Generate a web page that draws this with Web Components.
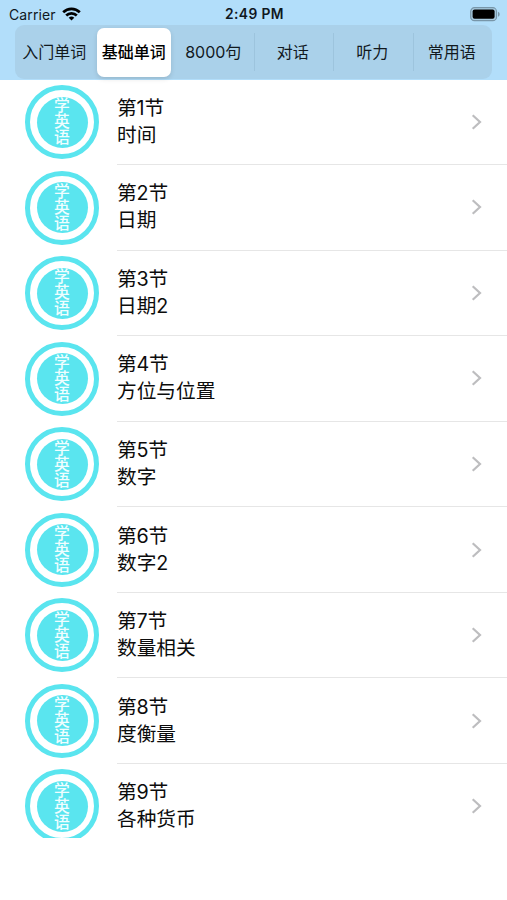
<!DOCTYPE html>
<html lang="zh-CN">
<head>
<meta charset="utf-8">
<title>学英语</title>
<style>
	body{
		margin: 0;
		height: 900px;
		overflow: hidden;
		background: #fff;
		color: #0c0c0c;
		font-family: Inter, "Noto Sans CJK SC", sans-serif;
	}
	.top{
		height: 79.5px;
		background: #b2defa;
	}
</style>
</head>
<body>
	<header class="top">
		<status-bar carrier="Carrier" time="2:49 PM"></status-bar>
		<segment-bar>
			<segment-item>入门单词</segment-item>
			<segment-item selected>基础单词</segment-item>
			<segment-item>8000句</segment-item>
			<segment-item divided>对话</segment-item>
			<segment-item divided>听力</segment-item>
			<segment-item divided>常用语</segment-item>
		</segment-bar>
	</header>
	<lesson-list></lesson-list>

<script>
(()=>{
	class StatusBar extends HTMLElement {
		constructor() {
			super();
			this.attachShadow({mode: 'open'});
			this.shadowRoot.innerHTML = `
				<style>
					:host{
						display: grid;
						grid-template-columns: 1fr auto 1fr;
						align-items: center;
						box-sizing: border-box;
						height: 25px;
						padding: 2px 7px 0 9px;
						font-size: 14px;
						line-height: 23px;
						color: #10181e;
					}
					.left{
						display: flex;
						align-items: center;
						gap: 6px;
					}
					#carrier{
						letter-spacing: .1px;
					}
					#time{
						font-weight: 600;
						font-size: 13.8px;
						letter-spacing: .4px;
						padding-top: 1px;
					}
					.battery{
						justify-self: end;
					}
					svg{
						display: block;
					}
				</style>
				<div class="left">
					<span id="carrier"></span>
					<svg width="19" height="14" viewBox="0 0 19 14" fill="none" stroke="#000" stroke-width="2.7">
						<path d="M1.2 5.3a11.8 11.8 0 0 1 16.6 0"/>
						<path d="M4.2 8.5a7.5 7.5 0 0 1 10.6 0"/>
						<path d="M9.5 13.6L6.7 10.8a4 4 0 0 1 5.6 0z" fill="#000" stroke="none"/>
					</svg>
				</div>
				<span id="time"></span>
				<svg class="battery" width="30" height="15" viewBox="0 0 30 15">
					<rect x=".7" y=".7" width="25.8" height="13" rx="3.8" fill="#a9cce2" stroke="#7896a9" stroke-width="1.2"/>
					<rect x="2.6" y="2.6" width="22" height="9.2" rx="2" fill="#000"/>
					<path d="M28 4.7c2.2 1 2.2 4 0 5z" fill="#7896a9"/>
				</svg>
			`;
			this.shadowRoot.getElementById('carrier').textContent = this.getAttribute('carrier');
			this.shadowRoot.getElementById('time').textContent = this.getAttribute('time');
		}
	}

	class SegmentBar extends HTMLElement {
		constructor() {
			super();
			this.attachShadow({mode: 'open'});
			this.shadowRoot.innerHTML = `
				<style>
					:host{
						display: grid;
						grid-template-columns: repeat(6, 1fr);
						height: 54px;
						margin: 0 15px;
						border-radius: 9px;
						background: #aad1ea;
					}
				</style>
				<slot></slot>
			`;
		}
	}

	class SegmentItem extends HTMLElement {
		constructor() {
			super();
			this.attachShadow({mode: 'open'});
			this.shadowRoot.innerHTML = `
				<style>
					:host{
						display: flex;
						padding: 3px 3px 2.5px 2px;
						font-size: 16px;
						line-height: 25px;
						white-space: nowrap;
						color: #12191e;
					}
					div{
						flex: 1;
						display: flex;
						align-items: center;
						justify-content: center;
						border-radius: 7px;
					}
					:host([selected]) div{
						background: #fff;
						color: #000;
						font-weight: 500;
						box-shadow: 0 2px 5px rgba(0, 0, 0, .12);
					}
					:host([divided]){
						background: linear-gradient(#9dc4dd, #9dc4dd) 0 50% / 1px 38px no-repeat;
					}
				</style>
				<div><slot></slot></div>
			`;
		}
	}

	class LessonBadge extends HTMLElement {
		constructor() {
			super();
			this.attachShadow({mode: 'open'});
			this.shadowRoot.innerHTML = `
				<style>
					:host{
						display: grid;
						place-items: center;
						box-sizing: border-box;
						width: 74px;
						height: 74px;
						border: 5px solid #5ae5ef;
						border-radius: 50%;
						background: #fff;
					}
					div{
						display: flex;
						align-items: center;
						justify-content: center;
						width: 51px;
						height: 51px;
						border-radius: 50%;
						background: #5ae5ef;
						color: #effeff;
						font: 500 15.8px/16px "Noto Sans CJK SC", sans-serif;
					}
					span{
						writing-mode: vertical-rl;
						letter-spacing: .3px;
						padding: 0 1px 1px 0;
					}
				</style>
				<div><span>学英语</span></div>
			`;
		}
	}

	class LessonRow extends HTMLElement {
		constructor() {
			super();
			this.attachShadow({mode: 'open'});
			this.shadowRoot.innerHTML = `
				<style>
					:host{
						display: flex;
						height: 85.55px;
						padding-left: 25px;
						gap: 18px;
					}
					lesson-badge{
						margin-top: 5.5px;
						flex: none;
					}
					.body{
						flex: 1;
						display: flex;
						align-items: center;
						justify-content: space-between;
						box-sizing: border-box;
						padding-right: 25px;
						border-bottom: 1px solid #e6e6e6;
					}
					:host(:last-child) .body{
						border-color: transparent;
					}
					.text{
						font-size: 19.7px;
						line-height: 27px;
					}
				</style>
				<lesson-badge></lesson-badge>
				<div class="body">
					<div class="text">
						<div><slot name="number"></slot></div>
						<div><slot></slot></div>
					</div>
					<svg width="11" height="18" viewBox="0 0 11 18" fill="none" stroke="#bdbdbf" stroke-width="2.2">
						<path d="M1.7 2.2L9 9L1.7 15.8"/>
					</svg>
				</div>
			`;
		}
	}

	const lessons = ['时间', '日期', '日期2', '方位与位置', '数字', '数字2', '数量相关', '度衡量', '各种货币'];

	class LessonList extends HTMLElement {
		constructor() {
			super();
			this.attachShadow({mode: 'open'});
			this.shadowRoot.innerHTML = `
				<style>
					:host{
						display: block;
						height: 758px;
						overflow: hidden;
					}
					span{
						letter-spacing: -.15px;
					}
				</style>
				${lessons.map((title, i)=>`
					<lesson-row><span slot="number">第${i + 1}节</span>${title}</lesson-row>
				`).join('')}
			`;
		}
	}

	window.customElements.define('status-bar', StatusBar);
	window.customElements.define('segment-bar', SegmentBar);
	window.customElements.define('segment-item', SegmentItem);
	window.customElements.define('lesson-badge', LessonBadge);
	window.customElements.define('lesson-row', LessonRow);
	window.customElements.define('lesson-list', LessonList);
})();
</script>
</body>
</html>
